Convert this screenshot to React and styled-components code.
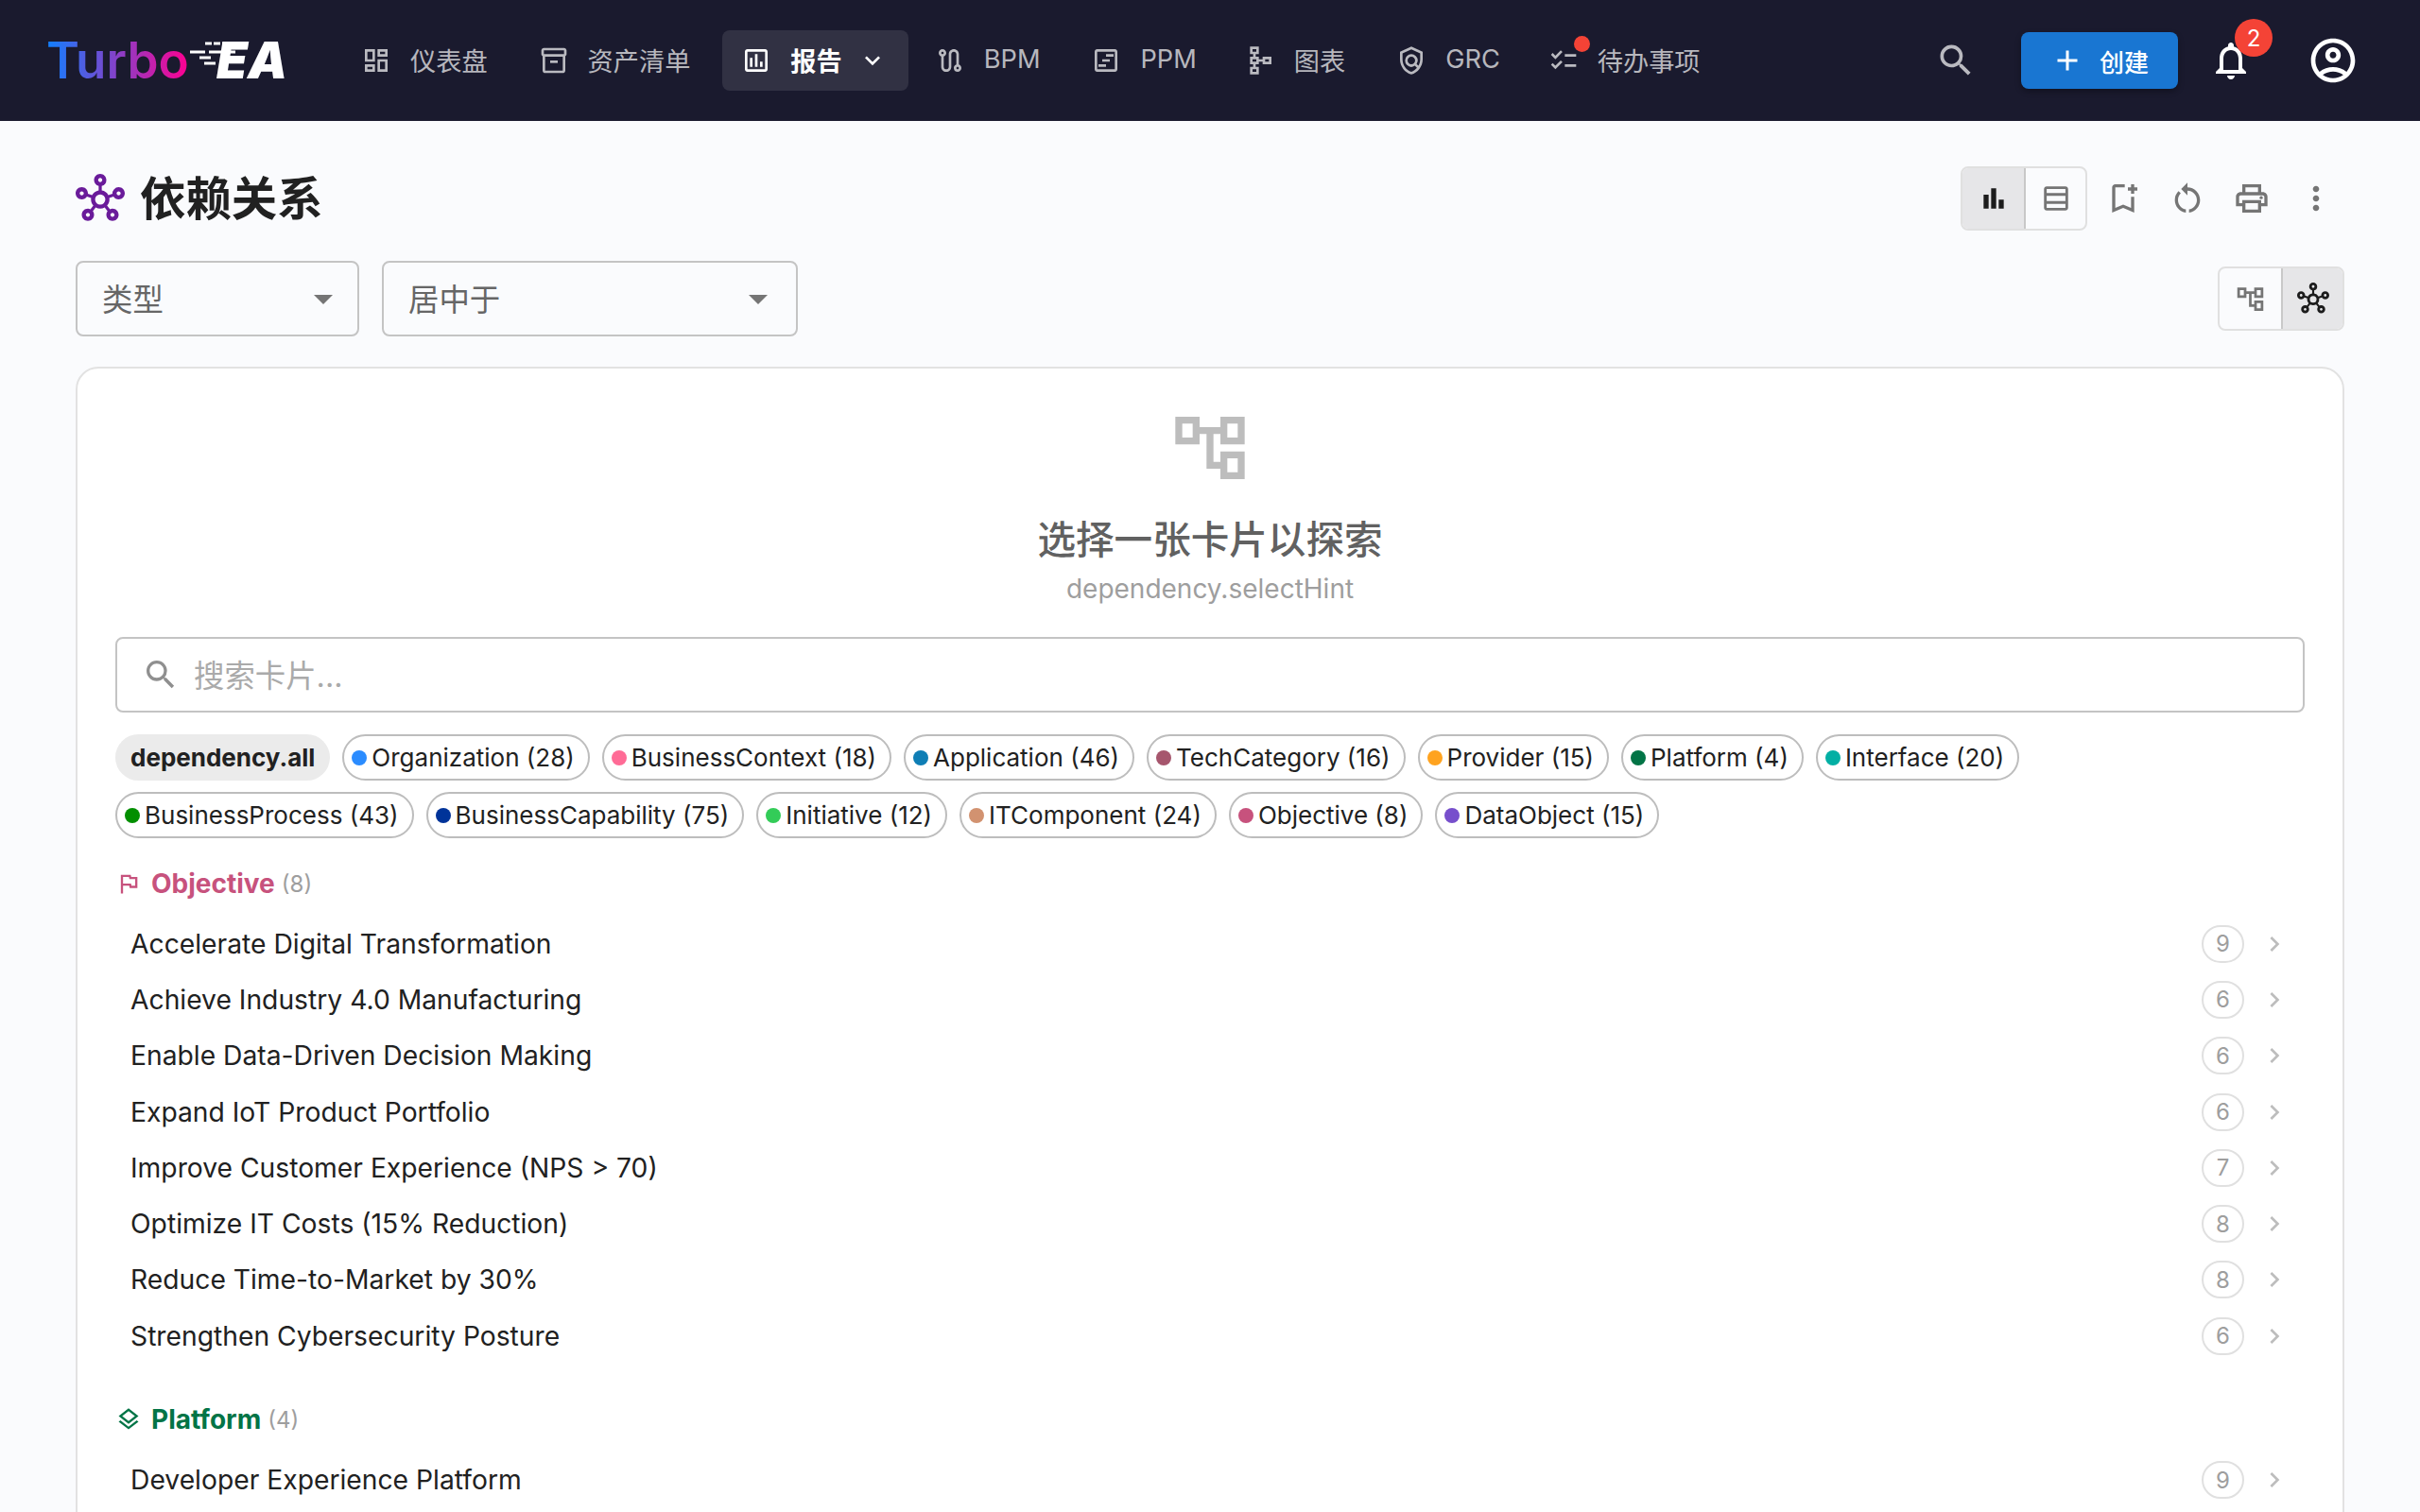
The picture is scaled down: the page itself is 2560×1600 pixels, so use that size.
import React from 'react';
import styled, { createGlobalStyle } from 'styled-components';
import {
  MdOutlineDashboard, MdOutlineInventory2, MdOutlineAssessment, MdExpandMore, MdOutlineRoute,
  MdOutlineViewTimeline, MdOutlineSchema, MdOutlinePolicy, MdOutlineChecklist, MdSearch, MdAdd,
  MdNotificationsNone, MdOutlineAccountCircle, MdOutlineHub, MdBarChart, MdOutlineTableRows,
  MdOutlineBookmarkAdd, MdRestartAlt, MdOutlinePrint, MdMoreVert, MdArrowDropDown, MdOutlineAccountTree,
  MdOutlineFlag, MdOutlineLayers, MdChevronRight,
} from 'react-icons/md';

const Global = createGlobalStyle`
  html, body { margin: 0; padding: 0; background: #fafbfd; overflow: hidden; }
  body { font-family: Inter, "Noto Sans CJK SC", sans-serif; color: #212121; }
  * { box-sizing: border-box; }
`;

const Page = styled.div`
  width: 2560px;
  height: 1600px;
  overflow: hidden;
`;

const TopBar = styled.header`
  height: 128px;
  background: #1a1a2e;
  display: flex;
  align-items: center;
  padding: 0 64px 0 49px;
`;

const Logo = styled.div`
  position: relative;
  width: 255px;
  margin-right: 58px;
  display: flex;
  align-items: center;
  height: 60px;
`;

const LogoTurbo = styled.span`
  font-size: 53px;
  font-weight: 600;
  background: linear-gradient(90deg, #1080ff, #ff0090);
  -webkit-background-clip: text;
  background-clip: text;
  color: transparent;
`;

const LogoEA = styled.span`
  position: absolute;
  left: 180px;
  top: 0;
  font-family: Inter, sans-serif;
  font-style: italic;
  font-weight: 900;
  font-size: 53px;
  line-height: 60px;
  color: #fff;
`;

const LogoLines = styled.svg`
  position: absolute;
  left: 150px;
  top: 8px;
`;

const NavMenu = styled.nav`
  display: flex;
  align-items: center;
  gap: 8px;
`;

const NavItem = styled.div`
  position: relative;
  height: 64px;
  display: flex;
  align-items: center;
  gap: ${p => (p.$menu ? '16px' : '20px')};
  padding: 0 ${p => (p.$menu ? 22 : p.$pr || 26)}px 0 20px;
  border-radius: 8px;
  font-size: 27.2px;
  font-weight: ${p => (p.$active ? 700 : 400)};
  color: ${p => (p.$active ? '#fff' : 'rgba(255,255,255,0.7)')};
  background: ${p => (p.$active ? 'rgba(255,255,255,0.1)' : 'transparent')};
`;

const NavLabel = styled.span`
  margin-left: ${p => (p.$menu ? '4px' : 0)};
  margin-bottom: 3px;
`;

const TodoDot = styled.span`
  position: absolute;
  left: 47px;
  top: 6px;
  width: 17px;
  height: 17px;
  border-radius: 50%;
  background: #f44336;
`;

const Spacer = styled.div`
  flex: 1;
`;

const BarSearch = styled.div`
  display: flex;
  color: rgba(255,255,255,0.7);
  margin-right: 47px;
`;

const CreateButton = styled.div`
  width: 166px;
  height: 60px;
  background: #1976d2;
  border-radius: 8px;
  box-shadow: 0 3px 6px rgba(0,0,0,0.3);
  display: flex;
  align-items: center;
  justify-content: center;
  gap: 16px;
  color: #fff;
  font-size: 26px;
  font-weight: 500;
  margin-right: 32px;
`;

const BellWrap = styled.div`
  position: relative;
  display: flex;
  color: #fff;
  margin-right: 56px;
`;

const BellBadge = styled.span`
  position: absolute;
  left: 28px;
  top: -20px;
  width: 40px;
  height: 40px;
  border-radius: 50%;
  background: #f44336;
  color: #fff;
  font-size: 24px;
  display: flex;
  align-items: center;
  justify-content: center;
`;

const Avatar = styled.div`
  display: flex;
  color: #fff;
`;

const Main = styled.main`
  padding: 48px 80px 0;
`;

const TitleRow = styled.div`
  height: 68px;
  display: flex;
  align-items: center;
  justify-content: space-between;
  margin-bottom: 32px;
`;

const TitleLeft = styled.div`
  display: flex;
  align-items: center;
  gap: 16px;
`;

const TitleIcon = styled.span`
  display: flex;
  color: #6a1b9a;
`;

const Title = styled.h1`
  margin: 0 0 6px;
  font-size: 48.4px;
  font-weight: 700;
  color: #212121;
`;

const TitleActions = styled.div`
  display: flex;
  align-items: center;
  margin-right: -4px;
`;

const ToggleGroup = styled.div`
  display: flex;
  height: 68px;
  border: 2px solid #e0e0e0;
  border-radius: 8px;
  overflow: hidden;
  margin-right: ${p => p.$mr || 0}px;
`;

const Toggle = styled.div`
  width: 65px;
  display: flex;
  align-items: center;
  justify-content: center;
  color: ${p => (p.$on ? '#1c1c1c' : '#757575')};
  background: ${p => (p.$on ? '#e6e6e8' : 'transparent')};
  & + & { border-left: 2px solid #c8c8c8; }
`;

const ActionIcon = styled.div`
  width: 68px;
  display: flex;
  justify-content: center;
  color: #757575;
`;

const FilterRow = styled.div`
  height: 80px;
  display: flex;
  align-items: center;
  gap: 24px;
  margin-bottom: 32px;
`;

const Select = styled.div`
  width: ${p => p.$w}px;
  height: 80px;
  border: 2px solid #c4c4c4;
  border-radius: 8px;
  display: flex;
  align-items: center;
  justify-content: space-between;
  padding: 0 ${p => p.$pr}px 0 26px;
  font-size: 32.4px;
  color: #666;
`;

const SelectText = styled.span`
  margin-bottom: 4px;
`;

const SelectArrow = styled.span`
  display: flex;
  color: #757575;
`;

const ViewSwitch = styled.div`
  margin-left: auto;
`;

const Card = styled.section`
  background: #fff;
  border: 2px solid #e2e2e2;
  border-radius: 24px 24px 0 0;
  padding: 40px 40px 0;
  min-height: 1300px;
`;

const Empty = styled.div`
  display: flex;
  flex-direction: column;
  align-items: center;
  margin-bottom: 30px;
`;

const EmptyIcon = styled.span`
  display: flex;
  color: #bdbdbd;
  margin-bottom: 24px;
`;

const EmptyTitle = styled.div`
  font-size: 40.6px;
  font-weight: 500;
  line-height: 60px;
  color: #616161;
`;

const EmptyHint = styled.div`
  font-size: 28px;
  line-height: 42px;
  color: #9e9e9e;
`;

const SearchBox = styled.div`
  height: 80px;
  border: 2px solid #c4c4c4;
  border-radius: 8px;
  display: flex;
  align-items: center;
  gap: 15px;
  padding: 0 26px;
  font-size: 32.4px;
  color: #aaa;
  margin-bottom: 23px;
`;

const SearchGlyph = styled.span`
  display: flex;
  color: #8f8f8f;
`;

const SearchHint = styled.span`
  margin-bottom: 3px;
`;

const ChipWrap = styled.div`
  display: flex;
  flex-wrap: wrap;
  gap: 12px 13px;
  margin-bottom: 26px;
`;

const Chip = styled.div`
  height: 49px;
  border-radius: 25px;
  display: flex;
  align-items: center;
  gap: 5px;
  font-size: 26px;
  padding: ${p => (p.$all ? '0 16px' : '0 14px 0 8px')};
  border: ${p => (p.$all ? 'none' : '2px solid #bdbdbd')};
  background: ${p => (p.$all ? '#ebebeb' : 'transparent')};
  font-weight: ${p => (p.$all ? 700 : 400)};
  color: #212121;
`;

const Dot = styled.span`
  width: 16px;
  height: 16px;
  border-radius: 50%;
  background: ${p => p.$c};
`;

const SectionHead = styled.div`
  height: 44px;
  display: flex;
  align-items: center;
  gap: 10px;
  color: ${p => p.$c};
  font-size: 28px;
  font-weight: 700;
  margin-top: ${p => p.$mt || 0}px;
  margin-bottom: 12px;
`;

const SectionCount = styled.span`
  font-size: 24px;
  font-weight: 400;
  color: #9e9e9e;
  margin-left: -3px;
`;

const ItemRow = styled.div`
  height: 59.3px;
  display: flex;
  align-items: center;
  padding: 0 16px;
  font-size: 28.25px;
  color: #212121;
`;

const ItemName = styled.span`
  flex: 1;
`;

const CountBadge = styled.span`
  width: 45px;
  height: 40px;
  border: 2px solid #e0e0e0;
  border-radius: 20px;
  display: flex;
  align-items: center;
  justify-content: center;
  font-size: 24px;
  color: #9e9e9e;
  margin-right: 16px;
`;

const Chevron = styled.span`
  display: flex;
  color: #bdbdbd;
`;

const chips = [
  ['Organization (28)', '#2b8cff'], ['BusinessContext (18)', '#ff6b96'], ['Application (46)', '#0f7eb5'],
  ['TechCategory (16)', '#a6566d'], ['Provider (15)', '#ffa31f'], ['Platform (4)', '#027446'],
  ['Interface (20)', '#02afa4'], ['BusinessProcess (43)', '#028f00'], ['BusinessCapability (75)', '#003399'],
  ['Initiative (12)', '#33cc58'], ['ITComponent (24)', '#d29270'], ['Objective (8)', '#c7527d'],
  ['DataObject (15)', '#774fcc'],
];

const objectives = [
  ['Accelerate Digital Transformation', 9], ['Achieve Industry 4.0 Manufacturing', 6],
  ['Enable Data-Driven Decision Making', 6], ['Expand IoT Product Portfolio', 6],
  ['Improve Customer Experience (NPS > 70)', 7], ['Optimize IT Costs (15% Reduction)', 8],
  ['Reduce Time-to-Market by 30%', 8], ['Strengthen Cybersecurity Posture', 6],
];

const Row = ({ name, count }) => (
  <ItemRow>
    <ItemName>{name}</ItemName>
    <CountBadge>{count}</CountBadge>
    <Chevron><MdChevronRight size={32} /></Chevron>
  </ItemRow>
);

export default function App() {
  return (
    <Page>
      <Global />
      <TopBar>
        <Logo>
          <LogoTurbo>Turbo</LogoTurbo>
          <LogoLines width="50" height="30" viewBox="0 0 50 30">
            <path d="M18 4h7M27 4h7M36 4h14M2 13h16M22 13h28M12 19h12M17 25h12" stroke="#fff" strokeWidth="3" />
          </LogoLines>
          <LogoEA>EA</LogoEA>
        </Logo>
        <NavMenu>
          <NavItem><MdOutlineDashboard size={32} /><NavLabel>仪表盘</NavLabel></NavItem>
          <NavItem><MdOutlineInventory2 size={32} /><NavLabel>资产清单</NavLabel></NavItem>
          <NavItem $active $menu><MdOutlineAssessment size={32} /><NavLabel $menu>报告</NavLabel><MdExpandMore size={32} /></NavItem>
          <NavItem><MdOutlineRoute size={32} /><NavLabel>BPM</NavLabel></NavItem>
          <NavItem $pr={23}><MdOutlineViewTimeline size={32} /><NavLabel>PPM</NavLabel></NavItem>
          <NavItem><MdOutlineSchema size={32} /><NavLabel>图表</NavLabel></NavItem>
          <NavItem $pr={23}><MdOutlinePolicy size={32} /><NavLabel>GRC</NavLabel></NavItem>
          <NavItem><MdOutlineChecklist size={32} /><TodoDot /><NavLabel>待办事项</NavLabel></NavItem>
        </NavMenu>
        <Spacer />
        <BarSearch><MdSearch size={44} /></BarSearch>
        <CreateButton><MdAdd size={36} />创建</CreateButton>
        <BellWrap><MdNotificationsNone size={48} /><BellBadge>2</BellBadge></BellWrap>
        <Avatar><MdOutlineAccountCircle size={56} /></Avatar>
      </TopBar>
      <Main>
        <TitleRow>
          <TitleLeft>
            <TitleIcon><MdOutlineHub size={52} /></TitleIcon>
            <Title>依赖关系</Title>
          </TitleLeft>
          <TitleActions>
            <ToggleGroup $mr={4}>
              <Toggle $on><MdBarChart size={32} /></Toggle>
              <Toggle><MdOutlineTableRows size={34} /></Toggle>
            </ToggleGroup>
            <ActionIcon><MdOutlineBookmarkAdd size={40} /></ActionIcon>
            <ActionIcon><MdRestartAlt size={40} /></ActionIcon>
            <ActionIcon><MdOutlinePrint size={40} /></ActionIcon>
            <ActionIcon><MdMoreVert size={40} /></ActionIcon>
          </TitleActions>
        </TitleRow>
        <FilterRow>
          <Select $w={300} $pr={12}><SelectText>类型</SelectText><SelectArrow><MdArrowDropDown size={48} /></SelectArrow></Select>
          <Select $w={440} $pr={16}><SelectText>居中于</SelectText><SelectArrow><MdArrowDropDown size={48} /></SelectArrow></Select>
          <ViewSwitch>
            <ToggleGroup>
              <Toggle><MdOutlineAccountTree size={33} /></Toggle>
              <Toggle $on><MdOutlineHub size={34} /></Toggle>
            </ToggleGroup>
          </ViewSwitch>
        </FilterRow>
        <Card>
          <Empty>
            <EmptyIcon><MdOutlineAccountTree size={88} /></EmptyIcon>
            <EmptyTitle>选择一张卡片以探索</EmptyTitle>
            <EmptyHint>dependency.selectHint</EmptyHint>
          </Empty>
          <SearchBox><SearchGlyph><MdSearch size={40} /></SearchGlyph><SearchHint>搜索卡片...</SearchHint></SearchBox>
          <ChipWrap>
            <Chip $all>dependency.all</Chip>
            {chips.map(([label, c]) => (
              <Chip key={label}><Dot $c={c} />{label}</Chip>
            ))}
          </ChipWrap>
          <SectionHead $c="#c7527d">
            <MdOutlineFlag size={28} />Objective<SectionCount>(8)</SectionCount>
          </SectionHead>
          {objectives.map(([name, count]) => <Row key={name} name={name} count={count} />)}
          <SectionHead $c="#027446" $mt={37}>
            <MdOutlineLayers size={28} />Platform<SectionCount>(4)</SectionCount>
          </SectionHead>
          <Row name="Developer Experience Platform" count={9} />
        </Card>
      </Main>
    </Page>
  );
}
